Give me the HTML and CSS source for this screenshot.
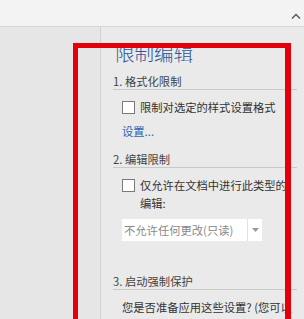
FILE: index.html
```html
<!DOCTYPE html>
<html lang="zh-CN">
<head>
    <meta charset="UTF-8">
    <meta name="viewport" content="width=device-width, initial-scale=1.0">
    <title>限制编辑</title>
    <link rel="stylesheet" href="styles.css">
</head>
<body>
    <div class="ribbon">
        <svg class="collapse" width="10" height="6" viewBox="0 0 10 6">
            <path d="M1 5.5 L5 1.5 L9 5.5" fill="none" stroke="#555" stroke-width="1.4"/>
        </svg>
    </div>

    <div class="workspace">
        <div class="document"></div>

        <div class="pane">
            <h1 class="pane-title">限制编辑</h1>

            <h2 class="section-title">1. 格式化限制</h2>
            <div class="check-row">
                <span class="checkbox"></span>
                <span class="check-label">限制对选定的样式设置格式</span>
            </div>
            <a class="link" href="#">设置...</a>

            <h2 class="section-title second">2. 编辑限制</h2>
            <div class="check-row narrow">
                <span class="checkbox"></span>
                <span class="check-label">仅允许在文档中进行此类型的编辑:</span>
            </div>
            <div class="dropdown">
                <span class="dropdown-value">不允许任何更改(只读)</span>
                <span class="dropdown-arrow">
                    <svg width="7" height="4" viewBox="0 0 7 4"><path d="M0 0 L7 0 L3.5 4 Z" fill="#999"/></svg>
                </span>
            </div>

            <h2 class="section-title third">3. 启动强制保护</h2>
            <p class="note">您是否准备应用这些设置? (您可以稍后将其关闭)</p>
        </div>
    </div>

    <!-- hand-drawn highlight over the pane -->
    <div class="highlight"></div>
</body>
</html>
```

FILE: styles.css
```css
html, body {
    margin: 0;
    height: 319px;
    overflow: hidden;
}
body {
    font-family: "Noto Sans CJK SC", "Noto Sans", sans-serif;
    background: #e8e8e8;
    color: #333;
    display: flex;
    flex-direction: column;
    position: relative;
}
.ribbon {
    flex: none;
    height: 26px;
    background: #f3f3f3;
    border-bottom: 1px solid #d6d6d6;
    display: flex;
    justify-content: flex-end;
    align-items: center;
    padding-right: 3px;
}
.collapse {
    margin-top: 6px;
}
.workspace {
    flex: 1;
    min-height: 0;
    overflow: hidden;
    display: flex;
}
.document {
    width: 100px;
    background: #e6e6e6;
    border-right: 1px solid #d2d2d2;
}
.pane {
    flex: 1;
    background: #eaeaea;
    padding: 14px 7px 0 12px;
}
.pane-title {
    margin: 0 0 0 2px;
    font-size: 19.5px;
    line-height: 24px;
    font-weight: 300;
    color: #2f5597;
}
.section-title {
    margin: 9px 0 0;
    font-size: 11.3px;
    line-height: 15px;
    font-weight: normal;
    color: #444;
    border-bottom: 1px solid #c9c9c9;
}
.section-title.second {
    margin-top: 12px;
}
.section-title.third {
    margin-top: 33px;
}
.check-row {
    display: flex;
    gap: 5px;
    margin: 8px 0 0 9px;
    font-size: 11.3px;
    line-height: 18px;
}
.check-row.narrow {
    margin-right: 10px;
}
.checkbox {
    flex: none;
    width: 11px;
    height: 11px;
    margin-top: 3px;
    background: #fff;
    border: 1px solid #7a7a7a;
}
.link {
    display: block;
    margin: 6px 0 0 9px;
    font-size: 11.3px;
    line-height: 18px;
    color: #2e63b0;
    text-decoration: none;
}
.dropdown {
    display: flex;
    width: 140px;
    height: 22px;
    margin: 7px 0 0 9px;
    background: #fff;
    font-size: 11.3px;
    line-height: 22px;
    color: #888;
}
.dropdown-value {
    flex: 1;
    padding-left: 2px;
}
.dropdown-arrow {
    width: 14px;
    border-left: 1px solid #e2e2e2;
    display: flex;
    align-items: center;
    justify-content: center;
}
.note {
    margin: 8px 0 0 9px;
    font-size: 11.3px;
    line-height: 18px;
    color: #333;
}
.highlight {
    position: absolute;
    left: 73px;
    top: 43px;
    width: 207px;
    height: 300px;
    border: 5px solid #e3000b;
    border-right-width: 6px;
}
```
